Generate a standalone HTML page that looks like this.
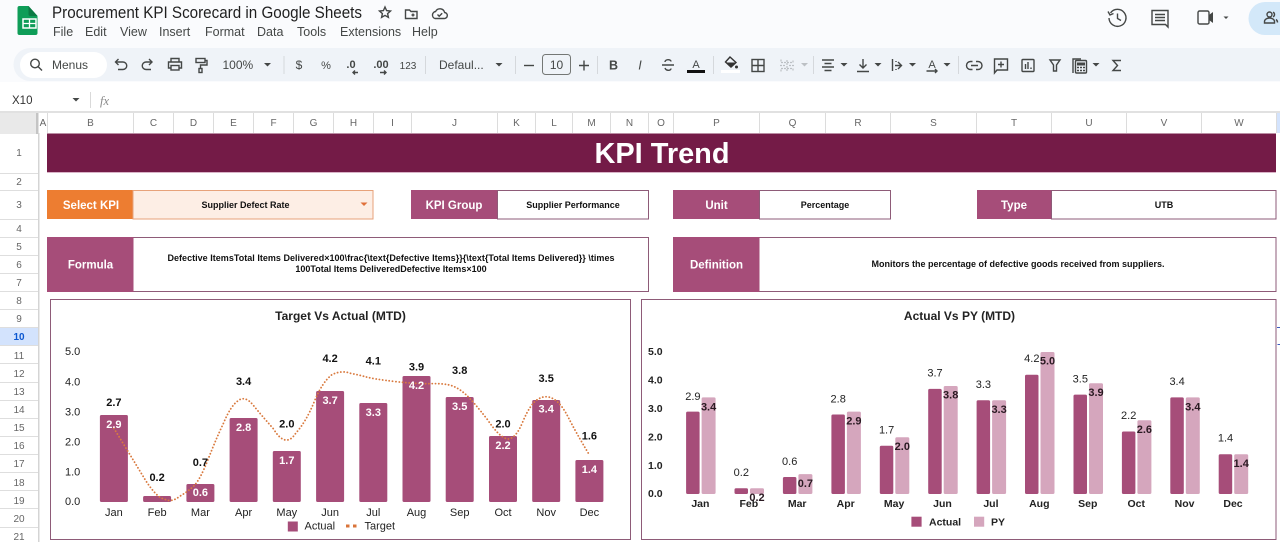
<!DOCTYPE html>
<html lang="en"><head><meta charset="utf-8"><title>Procurement KPI Scorecard in Google Sheets</title>
<style>
html,body{margin:0;padding:0;background:#fff;width:1280px;height:542px;overflow:hidden}
svg{display:block;filter:blur(.3px)}
text{font-family:"Liberation Sans",sans-serif}
.ui{fill:#444746}
.m{font-size:12.5px;fill:#444746}
.t{font-size:12px;fill:#444746}
.col{font-size:10px;fill:#666;text-anchor:middle}
.row{font-size:10px;fill:#666;text-anchor:middle}
.hd{font-size:11.5px;font-weight:bold;fill:#fff;text-anchor:middle}
.val{font-size:9px;font-weight:bold;fill:#111;text-anchor:middle}
.ct{font-size:12px;font-weight:bold;fill:#222;text-anchor:middle}
.ax{font-size:11px;fill:#222}
.axb{font-size:10.5px;font-weight:bold;fill:#222}
.tl{font-size:11px;font-weight:bold;fill:#111;text-anchor:middle}
.wl{font-size:11px;font-weight:bold;fill:#fff;text-anchor:middle}
.mid{text-anchor:middle}
.ic{fill:none;stroke:#444746;stroke-width:1.4}
.car{fill:#444746}
</style></head><body>
<svg width="1280" height="542" viewBox="0 0 1280 542" xmlns="http://www.w3.org/2000/svg">
<rect width="1280" height="542" fill="#fff"/>
<rect width="1280" height="112" fill="#fafbfd"/>
<rect y="82" width="1280" height="30" fill="#fff"/>

<!-- Sheets logo -->
<path d="M21 6h9l9 10v17a2 2 0 0 1-2 2H21a2 2 0 0 1-2-2V8a2 2 0 0 1 2-2z" transform="translate(-1.5 0)" fill="#0f9d58"/>
<path d="M28.500 6l9 10h-7a2 2 0 0 1-2-2z" fill="#0b7a44"/>
<rect x="23" y="19" width="13" height="9" fill="none" stroke="#fff" stroke-width="1.500"/>
<path d="M29.500 19v9M23 23.500h13" stroke="#fff" stroke-width="1.300"/>

<text x="52" y="18" font-size="16.500" fill="#1f1f1f" textLength="310" lengthAdjust="spacingAndGlyphs">Procurement KPI Scorecard in Google Sheets</text>
<path d="M385 7l1.600 3.600 3.900.4-2.900 2.600.8 3.800-3.400-2-3.400 2 .8-3.800-2.900-2.600 3.900-.4z" class="ic"/>
<path d="M405.500 10h4l1.500 1.500h6v7h-11.500z" class="ic"/><path d="M411.500 15h3M413 13.500v3" class="ic" stroke-width="1"/>
<path d="M435 18.500h9a3 3 0 0 0 .6-6 4.800 4.800 0 0 0-9-1 3.600 3.600 0 0 0-.6 7z" class="ic"/><path d="M437.500 14.500l1.700 1.700 3-3" class="ic" stroke-width="1"/>

<text x="53" y="36" class="m">File</text><text x="85" y="36" class="m">Edit</text><text x="120" y="36" class="m">View</text><text x="159" y="36" class="m">Insert</text><text x="205" y="36" class="m">Format</text><text x="257" y="36" class="m">Data</text><text x="297" y="36" class="m">Tools</text><text x="340" y="36" class="m">Extensions</text><text x="412" y="36" class="m">Help</text>

<!-- top right -->
<path d="M1110.500 13a8.500 8.500 0 1 1-1.500 5" class="ic" stroke-width="1.700"/><path d="M1108 11.500l2 3.500 3.500-1.500" class="ic" stroke-width="1.500"/><path d="M1117.500 13.500v5l3.500 2" class="ic" stroke-width="1.500"/>
<path d="M1152 10.500h16v16.500l-2.500-2.500H1152z" class="ic" stroke-width="1.700"/><path d="M1155 14.500h10M1155 17.500h10M1155 20.500h10" class="ic" stroke-width="1.200"/>
<rect x="1198" y="11" width="11" height="13" rx="1.500" class="ic" stroke-width="1.700"/><path d="M1209 15l4-3v11l-4-3z" fill="#444746"/>
<path d="M1223.500 16.500h5l-2.500 2.500z" class="car"/>
<path d="M1280 2h-15a16.500 16.500 0 0 0 0 33h15z" fill="#d3e8f9"/>
<circle cx="1269.500" cy="14.500" r="2.500" class="ic" stroke-width="1.300"/><path d="M1264.500 23v-1.500a5 3.500 0 0 1 10 0V23z" class="ic" stroke-width="1.300"/><path d="M1273 12.200a2.500 2.500 0 0 1 0 4.600M1276 19.500a4 3.500 0 0 1 1.500 3" class="ic" stroke-width="1.200"/>

<!-- toolbar -->
<path d="M30 48H1280V81H30a16.500 16.500 0 0 1 0-33z" fill="#eff3f8"/>
<rect x="20" y="52" width="87" height="26" rx="13" fill="#fff"/>
<circle cx="35" cy="63.500" r="4.300" class="ic" stroke-width="1.500"/><path d="M38 66.500l4 4" class="ic" stroke-width="1.600"/>
<text x="52" y="69" class="t">Menus</text>
<path d="M116 62h7a3.500 3.500 0 0 1 0 7.500h-5" class="ic"/><path d="M118.500 59l-3 3 3 3" class="ic"/>
<path d="M152 62h-6a3.500 3.500 0 0 0 0 7.500h5" class="ic"/><path d="M149 59l3 3-3 3" class="ic"/>
<path d="M171 62v-3.500h8V62M171 68h-2.500v-6h13v6H179" class="ic"/><rect x="171" y="65.500" width="8" height="4.500" class="ic"/>
<rect x="196" y="58.500" width="9" height="4" class="ic"/><path d="M205 60.500h2v4.500h-6.500v3.500" class="ic"/><rect x="199" y="68.500" width="3" height="4" class="ic"/>
<text x="222.500" y="69" class="t">100%</text>
<path d="M264 63h7l-3.500 3.500z" class="car"/>
<rect x="283.500" y="56" width="1" height="18" fill="#d5d8dc"/>
<text x="299" y="69" class="t mid" style="font-size:12px">$</text>
<text x="326" y="69" class="t mid" style="font-size:11px">%</text>
<text x="351" y="68" class="t mid" style="font-size:11px;font-weight:bold">.0</text><path d="M353 72.500h5M355 70.500l-2 2 2 2" class="ic" stroke-width="1"/>
<text x="381" y="68" class="t mid" style="font-size:11px;font-weight:bold">.00</text><path d="M380 72.500h6M384 70.500l2 2-2 2" class="ic" stroke-width="1"/>
<text x="408" y="69" class="t mid" style="font-size:10px">123</text>
<rect x="425" y="56" width="1" height="18" fill="#d5d8dc"/>
<text x="439" y="69" class="t">Defaul...</text>
<path d="M495.500 63h7l-3.500 3.500z" class="car"/>
<rect x="515" y="56" width="1" height="18" fill="#d5d8dc"/>
<path d="M524 65.500h10" class="ic"/>
<rect x="542.500" y="54.500" width="28" height="20" rx="3" fill="none" stroke="#747775"/>
<text x="556.500" y="69" class="t mid" style="font-size:12px">10</text>
<path d="M579 65.500h10M584 60.500v10" class="ic"/>
<rect x="597" y="56" width="1" height="18" fill="#d5d8dc"/>
<text x="613.500" y="69.500" class="t mid" style="font-size:12.500px;font-weight:bold">B</text>
<text x="640" y="69.500" class="t mid" style="font-size:12.500px;font-style:italic">I</text>
<path d="M662 65h12M665 62c0-3 6-3 6-.5M665 68c1 3 6 3 6 .5" class="ic" stroke-width="1.100"/>
<text x="696" y="68" class="t mid" style="font-size:11px">A</text><rect x="687" y="70" width="18" height="3" fill="#111"/>
<rect x="713" y="56" width="1" height="18" fill="#d5d8dc"/>
<path d="M730 57l6 5.500-5 4.500-5.500-5z" fill="none" stroke="#333" stroke-width="1.400"/><path d="M726 62.500h10l-5 4.500z" fill="#333"/><circle cx="736.500" cy="67" r="1.500" fill="#333"/>
<rect x="721" y="70" width="19" height="3" fill="#fff"/>
<rect x="752" y="59.500" width="12" height="12" class="ic"/><path d="M758 59.500v12M752 65.500h12" class="ic"/>
<path d="M781 59.500v3h12v-3M781 71.500v-3h12v3M785 65.500h-5M789 65.500h5M787 60v11" fill="none" stroke="#bcc0c4" stroke-width="1.200" stroke-dasharray="2 1"/>
<path d="M801 63h7l-3.500 3.500z" fill="#bcc0c4"/>
<rect x="813" y="56" width="1" height="18" fill="#d5d8dc"/>
<path d="M822 60h12M824.500 63.500h7M822 67h12M824.500 70.500h7" class="ic" stroke-width="1.200"/>
<path d="M840.500 63h7l-3.500 3.500z" class="car"/>
<path d="M863 59v9M859.500 64.500l3.500 3.500 3.500-3.500M857 71.500h12" class="ic" stroke-width="1.300"/>
<path d="M874.500 63h7l-3.500 3.500z" class="car"/>
<path d="M892.500 59v12M895 65.500h6M898 62l3.500 3.500-3.500 3.500" class="ic" stroke-width="1.200"/><path d="M896 61v1M896 69v1" class="ic"/>
<path d="M909 63h7l-3.500 3.500z" class="car"/>
<text x="932" y="68" class="t mid" style="font-size:11px">A</text><path d="M926.500 71h10M935 69l2 2-2 2" class="ic" stroke-width="1"/>
<path d="M943.500 63h7l-3.500 3.500z" class="car"/>
<rect x="958" y="56" width="1" height="18" fill="#d5d8dc"/>
<path d="M972.500 61.500h-2a4 4 0 0 0 0 8h2M976 61.500h2a4 4 0 0 1 0 8h-2M971 65.500h7" class="ic" stroke-width="1.200"/>
<path d="M994.500 59h13v11h-10.500l-2.500 3z" class="ic" stroke-width="1.300"/><path d="M1001 61.500v6M998 64.500h6" class="ic" stroke-width="1.200"/>
<rect x="1022" y="59.500" width="12" height="12" rx="1" class="ic" stroke-width="1.300"/><path d="M1025.500 69v-5M1028 69v-7M1031 69v-1.500" class="ic" stroke-width="1.100"/>
<path d="M1050 60h10l-3.500 5v6h-3v-6z" class="ic" stroke-width="1.300"/>
<path d="M1073 73v-14h8" class="ic" stroke="#777" stroke-width="1.200"/><rect x="1075.500" y="60.500" width="11" height="12.500" rx="1" class="ic" stroke-width="1.200"/><path d="M1077 62.500h8v3h-8z" fill="#444746"/><path d="M1077 67.500h8M1077 70.500h8" stroke="#444746" stroke-width="1.400" stroke-dasharray="2 1"/>
<path d="M1092.500 63h7l-3.500 3.500z" class="car"/>
<path d="M1121 60.500h-8l4.500 5-4.500 5h8" class="ic" stroke-width="1.500"/>

<!-- formula bar -->
<text x="12" y="104" font-size="11.500" fill="#333">X10</text>
<path d="M72.500 98h7l-3.500 3.500z" class="car"/>
<rect x="90" y="92" width="1" height="16" fill="#d9d9d9"/>
<text x="100" y="105" font-size="12.500" font-style="italic" fill="#8a8a8a" style="font-family:'Liberation Serif',serif">fx</text>

<!-- column headers -->
<rect y="111" width="1280" height="2.500" fill="#e1e1e1"/>
<rect y="113" width="1280" height="20" fill="#fff"/>
<rect x="0" y="113" width="38" height="21" fill="#e9e9e9"/>
<rect x="36" y="113" width="2.500" height="21" fill="#c4c4c4"/>
<g stroke="#dcdcdc" stroke-width="1">
<path d="M47.500 113v20M133.500 113v20M173.500 113v20M213.500 113v20M253.500 113v20M293.500 113v20M333.500 113v20M373.500 113v20M411.500 113v20M497.500 113v20M535.500 113v20M572.500 113v20M610.500 113v20M648.500 113v20M673.500 113v20M759.500 113v20M825.500 113v20M890.500 113v20M976.500 113v20M1051.500 113v20M1126.500 113v20M1201.500 113v20M1276.500 113v20"/>
</g>
<rect x="1277" y="113" width="3" height="20" fill="#d3e3fd"/>
<g class="col">
<text class="col" x="43" y="126">A</text><text class="col" x="90.500" y="126">B</text><text class="col" x="153.500" y="126">C</text><text class="col" x="193.500" y="126">D</text><text class="col" x="233.500" y="126">E</text><text class="col" x="273.500" y="126">F</text><text class="col" x="313.500" y="126">G</text><text class="col" x="353.500" y="126">H</text><text class="col" x="392.500" y="126">I</text><text class="col" x="454.500" y="126">J</text><text class="col" x="516.500" y="126">K</text><text class="col" x="554" y="126">L</text><text class="col" x="591.500" y="126">M</text><text class="col" x="629.500" y="126">N</text><text class="col" x="661" y="126">O</text><text class="col" x="716.500" y="126">P</text><text class="col" x="792.500" y="126">Q</text><text class="col" x="858" y="126">R</text><text class="col" x="933.500" y="126">S</text><text class="col" x="1014" y="126">T</text><text class="col" x="1089" y="126">U</text><text class="col" x="1164" y="126">V</text><text class="col" x="1239" y="126">W</text>
</g>

<!-- row headers -->
<rect x="38" y="133" width="1.500" height="409" fill="#d4d4d4"/>
<rect x="0" y="327" width="38" height="18.500" fill="#d3e3fd"/>
<path d="M0 173.500h38M0 190.500h38M0 219.500h38M0 237.500h38M0 255.500h38M0 273.500h38M0 291.500h38M0 309.500h38M0 327.500h38M0 345.500h38M0 363.500h38M0 382.500h38M0 400.500h38M0 418.500h38M0 436.500h38M0 454.500h38M0 472.500h38M0 490.500h38M0 508.500h38M0 527.500h38" stroke="#dedede"/>
<text class="row" x="19" y="156">1</text><text class="row" x="19" y="185">2</text><text class="row" x="19" y="208">3</text><text class="row" x="19" y="232">4</text><text class="row" x="19" y="250">5</text><text class="row" x="19" y="268">6</text><text class="row" x="19" y="286">7</text><text class="row" x="19" y="304">8</text><text class="row" x="19" y="322">9</text><text class="row" x="19" y="340" style="font-weight:bold;fill:#0b57d0">10</text><text class="row" x="19" y="359">11</text><text class="row" x="19" y="377">12</text><text class="row" x="19" y="395">13</text><text class="row" x="19" y="413">14</text><text class="row" x="19" y="431">15</text><text class="row" x="19" y="449">16</text><text class="row" x="19" y="467">17</text><text class="row" x="19" y="486">18</text><text class="row" x="19" y="504">19</text><text class="row" x="19" y="522">20</text><text class="row" x="19" y="540">21</text>

<!-- title band -->
<rect x="47" y="133.500" width="1229" height="39" fill="#741b47"/>
<rect x="47" y="172" width="1229" height="1" fill="#d9b3c7"/>
<text x="662" y="163" text-anchor="middle" font-size="29" font-weight="bold" fill="#fff" textLength="135" lengthAdjust="spacingAndGlyphs">KPI Trend</text>

<!-- row 3 -->
<rect x="47" y="190" width="86" height="29" fill="#ed7d31"/>
<rect x="133" y="190.500" width="240" height="28.500" fill="#fdeee5" stroke="#e7a27a"/>
<text class="hd" x="91" y="209">Select KPI</text>
<text class="val" x="245.500" y="208">Supplier Defect Rate</text>
<path d="M360.500 202.500h7l-3.500 3.500z" fill="#e0703a"/>

<rect x="411" y="190" width="86" height="29" fill="#a64d79"/>
<rect x="497.500" y="190.500" width="151" height="28.500" fill="#fff" stroke="#8e5b78"/>
<text class="hd" x="454" y="209">KPI Group</text>
<text class="val" x="573" y="208">Supplier Performance</text>

<rect x="673" y="190" width="86" height="29" fill="#a64d79"/>
<rect x="759.500" y="190.500" width="131" height="28.500" fill="#fff" stroke="#8e5b78"/>
<text class="hd" x="716.500" y="209">Unit</text>
<text class="val" x="825" y="208">Percentage</text>

<rect x="977" y="190" width="75" height="29" fill="#a64d79"/>
<rect x="1051.500" y="190.500" width="224.500" height="28.500" fill="#fff" stroke="#8e5b78"/>
<text class="hd" x="1014" y="209">Type</text>
<text class="val" x="1164" y="208">UTB</text>

<!-- row 5-7 -->
<rect x="47.500" y="237.500" width="601" height="54" fill="#fff" stroke="#8e5b78"/>
<rect x="47" y="237" width="86.500" height="55" fill="#a64d79"/>
<text class="hd" x="90.500" y="268.500">Formula</text>
<text class="val" x="391" y="261" textLength="447" lengthAdjust="spacing">Defective ItemsTotal Items Delivered×100\frac{\text{Defective Items}}{\text{Total Items Delivered}} \times</text>
<text class="val" x="391" y="272">100Total Items DeliveredDefective Items×100</text>

<rect x="673.500" y="237.500" width="602.500" height="54" fill="#fff" stroke="#8e5b78"/>
<rect x="673" y="237" width="86.500" height="55" fill="#a64d79"/>
<text class="hd" x="716.500" y="268.500">Definition</text>
<text class="val" x="1018" y="267">Monitors the percentage of defective goods received from suppliers.</text>

<!-- chart 1 -->
<rect x="50.500" y="299.500" width="580" height="240" fill="#fff" stroke="#8e5b78"/>
<text class="ct" x="340.500" y="320">Target Vs Actual (MTD)</text>
<g class="ax">
<text class="ax" x="65" y="355">5.0</text><text class="ax" x="65" y="385.500">4.0</text><text class="ax" x="65" y="415.500">3.0</text><text class="ax" x="65" y="445.500">2.0</text><text class="ax" x="65" y="475.500">1.0</text><text class="ax" x="65" y="505">0.0</text>
</g>
<g fill="#a64d79">
<rect x="99.900" y="415" width="28" height="87" rx="1.500"/><rect x="143.100" y="496" width="28" height="6" rx="1.500"/><rect x="186.400" y="484" width="28" height="18" rx="1.500"/><rect x="229.600" y="418" width="28" height="84" rx="1.500"/><rect x="272.800" y="451" width="28" height="51" rx="1.500"/><rect x="316.100" y="391" width="28" height="111" rx="1.500"/><rect x="359.300" y="403" width="28" height="99" rx="1.500"/><rect x="402.500" y="376" width="28" height="126" rx="1.500"/><rect x="445.700" y="397" width="28" height="105" rx="1.500"/><rect x="489" y="436" width="28" height="66" rx="1.500"/><rect x="532.200" y="400" width="28" height="102" rx="1.500"/><rect x="575.400" y="460" width="28" height="42" rx="1.500"/>
</g>
<path d="M113.900 428.300L145.900 480.900Q157.100 498 164.250 499Q171.400 503 179.600 496.350Q187.800 491.700 193.900 485.850Q200 480 208.150 459.150Q216.300 438.300 223.450 423.300Q230.600 406 237.750 401Q244.900 395 253.050 405Q261.200 415 273.450 428.850Q285.700 449 295.900 433Q306.100 421.700 314.250 401.700Q322.400 381.700 332.200 374.500Q342 370 350.600 373.350Q359.200 375 366.350 377Q373.500 379 394.900 381.500Q416.300 384 430.600 383.650Q444.900 383.300 452.050 385.800Q459.200 388.300 466.350 395Q473.500 401.700 487.750 420Q500 438.300 508.150 439Q516 438.300 522.450 422.500Q530.600 403 538.300 399Q546 394.500 553.600 399Q561.200 403.300 568.350 417.500Q575.500 431.700 589.400 455" fill="none" stroke="#d97a3f" stroke-width="1.800" stroke-linecap="round" stroke-linejoin="round" stroke-dasharray="0.100 3.200"/>
<g>
<text class="tl" x="113.900" y="406">2.7</text><text class="tl" x="157.100" y="481">0.2</text><text class="tl" x="200.400" y="466">0.7</text><text class="tl" x="243.600" y="385">3.4</text><text class="tl" x="286.800" y="427.500">2.0</text><text class="tl" x="330.100" y="362">4.2</text><text class="tl" x="373.300" y="364.500">4.1</text><text class="tl" x="416.500" y="370.500">3.9</text><text class="tl" x="459.700" y="374">3.8</text><text class="tl" x="503" y="427.500">2.0</text><text class="tl" x="546.200" y="382">3.5</text><text class="tl" x="589.400" y="439.500">1.6</text>
</g>
<g>
<text class="wl" x="113.900" y="428">2.9</text><text class="wl" x="200.400" y="496">0.6</text><text class="wl" x="243.600" y="431">2.8</text><text class="wl" x="286.800" y="464">1.7</text><text class="wl" x="330.100" y="404">3.7</text><text class="wl" x="373.300" y="416">3.3</text><text class="wl" x="416.500" y="389">4.2</text><text class="wl" x="459.700" y="410">3.5</text><text class="wl" x="503" y="449">2.2</text><text class="wl" x="546.200" y="412.500">3.4</text><text class="wl" x="589.400" y="473">1.4</text>
</g>
<g>
<text class="ax mid" x="113.900" y="516">Jan</text><text class="ax mid" x="157.100" y="516">Feb</text><text class="ax mid" x="200.400" y="516">Mar</text><text class="ax mid" x="243.600" y="516">Apr</text><text class="ax mid" x="286.800" y="516">May</text><text class="ax mid" x="330.100" y="516">Jun</text><text class="ax mid" x="373.300" y="516">Jul</text><text class="ax mid" x="416.500" y="516">Aug</text><text class="ax mid" x="459.700" y="516">Sep</text><text class="ax mid" x="503" y="516">Oct</text><text class="ax mid" x="546.200" y="516">Nov</text><text class="ax mid" x="589.400" y="516">Dec</text>
</g>
<rect x="287.800" y="521.500" width="10" height="10" fill="#a64d79"/>
<text class="ax" x="304.500" y="529.500">Actual</text>
<rect x="346" y="524.500" width="3.500" height="3" fill="#d9743a"/><rect x="353" y="524.500" width="3.500" height="3" fill="#d9743a"/>
<text class="ax" x="364.500" y="529.500">Target</text>

<!-- chart 2 -->
<rect x="641.500" y="299.500" width="634.500" height="240" fill="#fff" stroke="#8e5b78"/>
<text class="ct" x="959.500" y="320">Actual Vs PY (MTD)</text>
<path d="M1277.500 327v1M1277.500 327.500h3M1277.500 344.500h3" stroke="#3b5bc0" stroke-width="1"/>
<g>
<text class="axb" x="648" y="355">5.0</text><text class="axb" x="648" y="383.500">4.0</text><text class="axb" x="648" y="412">3.0</text><text class="axb" x="648" y="440.500">2.0</text><text class="axb" x="648" y="469">1.0</text><text class="axb" x="648" y="497">0.0</text>
</g>
<g fill="#a64d79">
<rect x="686.100" y="411.600" width="13.500" height="82.400" rx="1.500"/><rect x="734.500" y="488.300" width="13.500" height="5.700" rx="1.500"/><rect x="782.900" y="477" width="13.500" height="17" rx="1.500"/><rect x="831.400" y="414.500" width="13.500" height="79.500" rx="1.500"/><rect x="879.800" y="445.700" width="13.500" height="48.300" rx="1.500"/><rect x="928.200" y="388.900" width="13.500" height="105.100" rx="1.500"/><rect x="976.600" y="400.300" width="13.500" height="93.700" rx="1.500"/><rect x="1025" y="374.700" width="13.500" height="119.300" rx="1.500"/><rect x="1073.500" y="394.600" width="13.500" height="99.400" rx="1.500"/><rect x="1121.900" y="431.500" width="13.500" height="62.500" rx="1.500"/><rect x="1170.300" y="397.400" width="13.500" height="96.600" rx="1.500"/><rect x="1218.700" y="454.200" width="13.500" height="39.800" rx="1.500"/>
</g>
<g fill="#d5a6bd">
<rect x="701.600" y="397.400" width="14" height="96.600" rx="1.500"/><rect x="750" y="488.300" width="14" height="5.700" rx="1.500"/><rect x="798.400" y="474.100" width="14" height="19.900" rx="1.500"/><rect x="846.900" y="411.600" width="14" height="82.400" rx="1.500"/><rect x="895.300" y="437.200" width="14" height="56.800" rx="1.500"/><rect x="943.700" y="386" width="14" height="108" rx="1.500"/><rect x="992.100" y="400.300" width="14" height="93.700" rx="1.500"/><rect x="1040.500" y="352" width="14" height="142" rx="1.500"/><rect x="1089" y="383.200" width="14" height="110.800" rx="1.500"/><rect x="1137.400" y="420.200" width="14" height="73.800" rx="1.500"/><rect x="1185.800" y="397.400" width="14" height="96.600" rx="1.500"/><rect x="1234.200" y="454.200" width="14" height="39.800" rx="1.500"/>
</g>
<g>
<text class="ax mid" x="692.900" y="400">2.9</text><text class="ax mid" x="741.300" y="476">0.2</text><text class="ax mid" x="789.700" y="465">0.6</text><text class="ax mid" x="838.200" y="402.500">2.8</text><text class="ax mid" x="886.600" y="433.500">1.7</text><text class="ax mid" x="935" y="376.500">3.7</text><text class="ax mid" x="983.400" y="388">3.3</text><text class="ax mid" x="1031.800" y="362">4.2</text><text class="ax mid" x="1080.300" y="382.500">3.5</text><text class="ax mid" x="1128.700" y="419">2.2</text><text class="ax mid" x="1177.100" y="385">3.4</text><text class="ax mid" x="1225.500" y="441.500">1.4</text>
</g>
<g>
<text class="tl" style="fill:#2a1a22" x="708.600" y="410.500">3.4</text><text class="tl" style="fill:#2a1a22" x="757" y="501">0.2</text><text class="tl" style="fill:#2a1a22" x="805.400" y="487">0.7</text><text class="tl" style="fill:#2a1a22" x="853.900" y="424.500">2.9</text><text class="tl" style="fill:#2a1a22" x="902.300" y="450">2.0</text><text class="tl" style="fill:#2a1a22" x="950.700" y="398.500">3.8</text><text class="tl" style="fill:#2a1a22" x="999.100" y="413">3.3</text><text class="tl" style="fill:#2a1a22" x="1047.500" y="364.500">5.0</text><text class="tl" style="fill:#2a1a22" x="1096" y="396">3.9</text><text class="tl" style="fill:#2a1a22" x="1144.400" y="433">2.6</text><text class="tl" style="fill:#2a1a22" x="1192.800" y="410.500">3.4</text><text class="tl" style="fill:#2a1a22" x="1241.200" y="467">1.4</text>
</g>
<g>
<text class="axb mid" x="700.400" y="507">Jan</text><text class="axb mid" x="748.800" y="507">Feb</text><text class="axb mid" x="797.200" y="507">Mar</text><text class="axb mid" x="845.700" y="507">Apr</text><text class="axb mid" x="894.100" y="507">May</text><text class="axb mid" x="942.500" y="507">Jun</text><text class="axb mid" x="990.900" y="507">Jul</text><text class="axb mid" x="1039.300" y="507">Aug</text><text class="axb mid" x="1087.800" y="507">Sep</text><text class="axb mid" x="1136.200" y="507">Oct</text><text class="axb mid" x="1184.600" y="507">Nov</text><text class="axb mid" x="1233" y="507">Dec</text>
</g>
<rect x="911.400" y="516.700" width="10.200" height="10" fill="#a64d79"/>
<text class="axb" x="929" y="525.500">Actual</text>
<rect x="974" y="516.700" width="10.200" height="10" fill="#d5a6bd"/>
<text class="axb" x="991" y="525.500">PY</text>
</svg>
</body></html>
